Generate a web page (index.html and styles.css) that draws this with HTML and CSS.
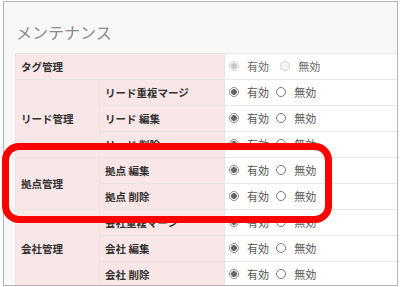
FILE: index.html
```html
<!DOCTYPE html>
<html lang="ja">
<head>
    <meta charset="UTF-8">
    <meta name="viewport" content="width=device-width, initial-scale=1.0">
    <title>メンテナンス</title>
    <link rel="stylesheet" href="styles.css">
</head>
<body>
    <div class="shot">
        <div class="panel">
            <h2 class="panel-title">メンテナンス</h2>

            <table class="setting-table">
                <colgroup>
                    <col class="col-group">
                    <col class="col-item">
                    <col class="col-value">
                </colgroup>
                <tr>
                    <th colspan="2">タグ管理</th>
                    <td>
                        <label class="opt disabled"><input type="radio" name="tag" checked disabled>有効</label>
                        <label class="opt disabled wide"><input type="radio" name="tag" disabled>無効</label>
                    </td>
                </tr>
                <tr>
                    <th rowspan="3">リード管理</th>
                    <th>リード重複マージ</th>
                    <td>
                        <label class="opt"><input type="radio" name="lead-merge" checked>有効</label>
                        <label class="opt"><input type="radio" name="lead-merge">無効</label>
                    </td>
                </tr>
                <tr>
                    <th>リード 編集</th>
                    <td>
                        <label class="opt"><input type="radio" name="lead-edit" checked>有効</label>
                        <label class="opt"><input type="radio" name="lead-edit">無効</label>
                    </td>
                </tr>
                <tr>
                    <th>リード 削除</th>
                    <td>
                        <label class="opt"><input type="radio" name="lead-del" checked>有効</label>
                        <label class="opt"><input type="radio" name="lead-del">無効</label>
                    </td>
                </tr>
                <tr>
                    <th rowspan="2">拠点管理</th>
                    <th>拠点 編集</th>
                    <td>
                        <label class="opt"><input type="radio" name="branch-edit" checked>有効</label>
                        <label class="opt"><input type="radio" name="branch-edit">無効</label>
                    </td>
                </tr>
                <tr>
                    <th>拠点 削除</th>
                    <td>
                        <label class="opt"><input type="radio" name="branch-del" checked>有効</label>
                        <label class="opt"><input type="radio" name="branch-del">無効</label>
                    </td>
                </tr>
                <tr>
                    <th rowspan="3">会社管理</th>
                    <th>会社重複マージ</th>
                    <td>
                        <label class="opt"><input type="radio" name="company-merge" checked>有効</label>
                        <label class="opt"><input type="radio" name="company-merge">無効</label>
                    </td>
                </tr>
                <tr>
                    <th>会社 編集</th>
                    <td>
                        <label class="opt"><input type="radio" name="company-edit" checked>有効</label>
                        <label class="opt"><input type="radio" name="company-edit">無効</label>
                    </td>
                </tr>
                <tr>
                    <th>会社 削除</th>
                    <td>
                        <label class="opt"><input type="radio" name="company-del" checked>有効</label>
                        <label class="opt"><input type="radio" name="company-del">無効</label>
                    </td>
                </tr>
            </table>
        </div>

        <!-- annotation box drawn over the screenshot -->
        <div class="highlight"></div>
    </div>
</body>
</html>
```

FILE: styles.css
```css
body {
    margin: 0;
    background-color: #ffffff;
    font-family: "Noto Sans CJK JP", "Noto Sans", sans-serif;
}

.shot {
    position: relative;
    width: 401px;
    height: 287px;
    padding: 1px 3px 0 3px;
    box-sizing: border-box;
}

.panel {
    height: 285px;
    border: 1px solid #b4b4b4;
    background-color: #f8f8f8;
    overflow: hidden;
    padding-left: 11px;
    box-sizing: border-box;
}

.panel-title {
    margin: 0;
    height: 51px;
    padding-top: 18px;
    padding-left: 1px;
    box-sizing: border-box;
    font-size: 16px;
    font-weight: normal;
    line-height: 24px;
    color: #8a8a8a;
}

.setting-table {
    border-collapse: collapse;
    width: 430px;
    table-layout: fixed;
}

.col-group {
    width: 84px;
}

.col-item {
    width: 125px;
}

.setting-table th,
.setting-table td {
    height: 25px;
    padding: 0 0 0 5px;
    border: 1px solid #ebe3e3;
    font-size: 10.5px;
    line-height: 14px;
    text-align: left;
    white-space: nowrap;
}

.setting-table th {
    background-color: #f9e7e7;
    color: #333333;
    font-weight: bold;
}

.setting-table td {
    background-color: #ffffff;
    border-color: #e8e8e8;
    padding-left: 4px;
}

.opt {
    display: inline-flex;
    align-items: center;
    margin-right: 5px;
    font-size: 11px;
    color: #555555;
}

.opt.wide {
    margin-left: 4px;
}

.opt input {
    appearance: none;
    width: 10px;
    height: 10px;
    margin: 0 8px 0 0;
    border: 1px solid #777777;
    border-radius: 50%;
    background-color: #ffffff;
    box-sizing: border-box;
}

.opt input:checked {
    background: radial-gradient(circle, #666666 0 2.6px, #ffffff 3.2px);
    border-color: #888888;
}

.opt.disabled {
    color: #6a6a6a;
}

.opt.disabled input {
    border-color: #d4d4d4;
    background-color: #f4f4f4;
}

.opt.disabled input:checked {
    background: radial-gradient(circle, #c8c8c8 0 2.6px, #f4f4f4 3.2px);
}

.highlight {
    position: absolute;
    left: 2px;
    top: 143px;
    width: 330px;
    height: 80px;
    border: 7px solid #ff0000;
    border-radius: 17px;
    box-sizing: border-box;
}
```
